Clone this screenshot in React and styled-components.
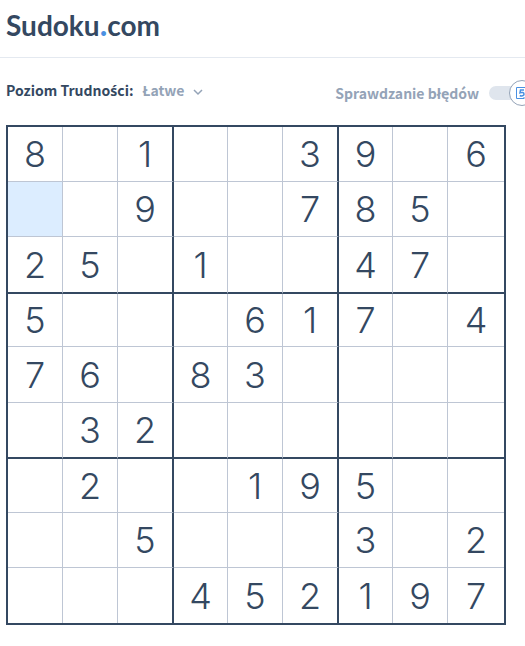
import React, { useState } from "react";
import styled, { createGlobalStyle } from "styled-components";

const ink = "#344861";
const muted = "#94a3b7";
const labelFont = '"Noto Sans CJK SC", "Noto Sans", sans-serif';

const GlobalStyle = createGlobalStyle`
  *, *::before, *::after { box-sizing: border-box; }
  body {
    margin: 0;
    background: #fff;
    color: ${ink};
    font-family: ${labelFont};
    overflow-x: hidden;
  }
`;

const Header = styled.header`
  height: 58px;
  padding: 6px;
  border-bottom: 1px solid #e4e9f0;
`;

const Logo = styled.a`
  display: flex;
  align-items: baseline;
  color: ${ink};
  font: 700 28px/36px Lato, sans-serif;
  text-decoration: none;
`;

const LogoDot = styled.span`
  color: #4a90e2;
  font-size: 32px;
`;

const Main = styled.main`
  padding: 0 19px 20px 6px;
  overflow-x: clip;
`;

const Toolbar = styled.div`
  display: flex;
  justify-content: space-between;
  align-items: center;
  height: 67px;
  padding-top: 2px;
  margin-right: -29px;
  font-size: 14px;
  line-height: 20px;
  font-weight: 700;
  white-space: nowrap;
`;

const Difficulty = styled.div`
  display: flex;
  align-items: center;
  padding-bottom: 5px;
`;

const AccentedLetter = styled.span`
  font-family: "Noto Sans", sans-serif;
  line-height: 1;
`;

const LevelButton = styled.button`
  display: flex;
  align-items: center;
  gap: 9px;
  margin-left: 9px;
  padding: 0;
  border: 0;
  background: none;
  color: ${muted};
  font: inherit;
  cursor: pointer;
`;

const Chevron = styled.svg`
  margin-top: 4px;
`;

const SwitchLabel = styled.label`
  display: flex;
  align-items: center;
  gap: 10px;
  color: ${muted};
  cursor: pointer;
`;

const Switch = styled.span`
  position: relative;
  width: 46px;
  height: 26px;
  display: flex;
  align-items: center;
  justify-content: flex-end;
  &::before {
    content: "";
    position: absolute;
    inset: 6px 6px 6px 0;
    border-radius: 7px;
    background: #dfe5ed;
  }
`;

const SwitchInput = styled.input`
  position: absolute;
  inset: 0;
  margin: 0;
  opacity: 0;
`;

const Knob = styled.span`
  position: relative;
  width: 26px;
  height: 26px;
  display: grid;
  place-items: center;
  border: 1px solid ${muted};
  border-radius: 50%;
  background: #fff;
`;

const Board = styled.div`
  display: grid;
  grid-template-columns: 55fr 55fr 56fr 54fr 55fr 56fr 54fr 55fr 56fr;
  grid-template-rows: 55fr 55fr 57fr 53fr 56fr 56fr 54fr 55fr 55fr;
  aspect-ratio: 1;
  border: 2px solid ${ink};
`;

const Cell = styled.button`
  min-width: 0;
  min-height: 0;
  padding: 0;
  border: 0 solid #bec6d4;
  border-right: ${({ $col }) => ($col === 8 ? "0" : $col % 3 === 2 ? `2px solid ${ink}` : "1px solid #bec6d4")};
  border-bottom: ${({ $row }) => ($row === 8 ? "0" : $row % 3 === 2 ? `2px solid ${ink}` : "1px solid #bec6d4")};
  background: ${({ $selected }) => ($selected ? "#dcedff" : "#fff")};
  color: ${ink};
  font: 300 36px/52px Inter, sans-serif;
  outline: none;
  cursor: pointer;
`;

const rows = [
  "8.1..39.6",
  "..9..785.",
  "25.1..47.",
  "5...617.4",
  "76.83....",
  ".32......",
  ".2..195..",
  "..5...3.2",
  "...452197",
];

export default function App() {
  const [selected, setSelected] = useState(9);
  const [checking, setChecking] = useState(true);
  return (
    <>
      <GlobalStyle />
      <Header>
        <Logo href="#">Sudoku<LogoDot>.</LogoDot>com</Logo>
      </Header>
      <Main>
        <Toolbar>
          <Difficulty>
            <span>Poziom Trudno<AccentedLetter>ś</AccentedLetter>ci:</span>
            <LevelButton type="button">
              Łatwe
              <Chevron width="10" height="7" viewBox="0 0 10 7" fill="none" stroke="currentColor" strokeWidth="1.5" aria-hidden="true">
                <path d="M1 1l4 4 4-4" />
              </Chevron>
            </LevelButton>
          </Difficulty>
          <SwitchLabel>
            Sprawdzanie błędów
            <Switch>
              <SwitchInput type="checkbox" checked={checking} onChange={(e) => setChecking(e.target.checked)} />
              <Knob>
                <svg width="14" height="14" viewBox="0 0 14 14" fill="none" stroke="#4a90e2" aria-hidden="true">
                  <path d="M9 12.500H1.500V1.500H12.500V8" />
                  <path strokeWidth="1.5" d="M9 4H5.500L5 6.800C7 6 9 6.500 9 8.200S6.500 10.400 4.800 9.500" />
                  <path d="M8.500 11l1.500 1.500 3-3" />
                </svg>
              </Knob>
            </Switch>
          </SwitchLabel>
        </Toolbar>
        <Board>
          {rows.flatMap((line, r) =>
            [...line].map((digit, c) => (
              <Cell
                key={`${r}${c}`}
                type="button"
                aria-label={digit === "." ? `Wiersz ${r + 1}, kolumna ${c + 1}` : undefined}
                $row={r}
                $col={c}
                $selected={selected === r * 9 + c}
                onClick={() => setSelected(r * 9 + c)}
              >
                {digit === "." ? "" : digit}
              </Cell>
            ))
          )}
        </Board>
      </Main>
    </>
  );
}
